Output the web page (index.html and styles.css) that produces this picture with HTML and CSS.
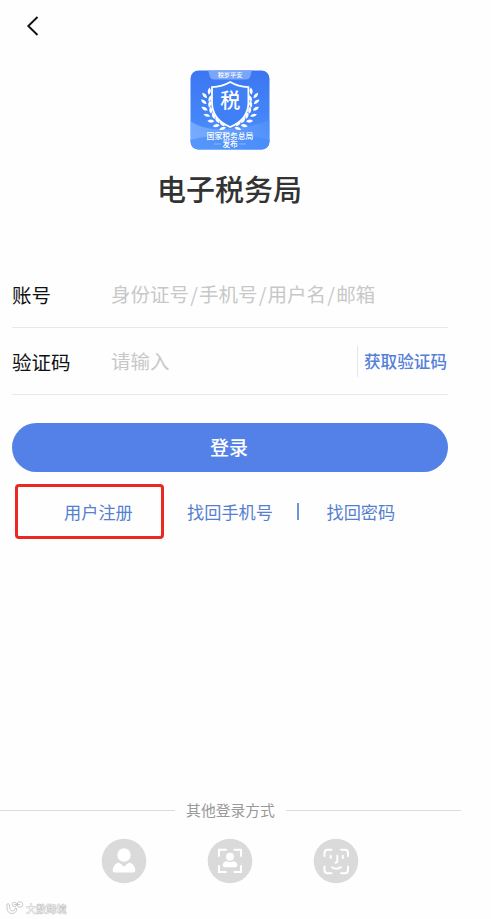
FILE: index.html
```
<!DOCTYPE html>
<html lang="zh-CN">
<head>
  <meta charset="UTF-8" />
  <title>电子税务局</title>
  <link rel="stylesheet" href="styles.css">
</head>
<body>
  <div class="page">
    <header>
      <svg class="back" width="14" height="22" viewBox="0 0 14 22"><path d="M11.5 2 L2.3 11 L11.5 20" /></svg>
    </header>

    <div class="logo">
      <svg width="80" height="80" viewBox="0 0 80 80">
        <defs>
          <linearGradient id="fundo" x1="0" y1="0" x2="0" y2="1">
            <stop offset="0" stop-color="#3c76f2" />
            <stop offset="0.6" stop-color="#4485f8" />
            <stop offset="1" stop-color="#5a9afb" />
          </linearGradient>
          <linearGradient id="onda" x1="0" y1="0" x2="1" y2="0">
            <stop offset="0" stop-color="#8dbbff" />
            <stop offset="1" stop-color="#5492fb" />
          </linearGradient>
          <clipPath id="borda"><rect x="0.5" y="0.5" width="79" height="79" rx="8" /></clipPath>
          <path id="folha" d="M0.5 0.5 Q-3.2 -2.2 -1.4 -6.4 Q2.8 -3.4 0.5 0.5Z" />
          <g id="ramo">
            <use href="#folha" transform="translate(18.5 24) rotate(22)" />
            <use href="#folha" transform="translate(16.2 28) rotate(-25)" />
            <use href="#folha" transform="translate(18.6 31) rotate(38)" />
            <use href="#folha" transform="translate(15.8 34) rotate(-35)" />
            <use href="#folha" transform="translate(18.8 37) rotate(25)" />
            <use href="#folha" transform="translate(16.9 40.5) rotate(-45)" />
            <use href="#folha" transform="translate(20.6 43) rotate(10)" />
            <use href="#folha" transform="translate(19.6 46.5) rotate(-58)" />
            <use href="#folha" transform="translate(24 48.5) rotate(-4)" />
            <use href="#folha" transform="translate(23.8 51.8) rotate(-70)" />
            <use href="#folha" transform="translate(28.5 53) rotate(-18)" />
            <use href="#folha" transform="translate(29.2 55.7) rotate(-82)" />
            <use href="#folha" transform="translate(34 56) rotate(-32)" />
            <use href="#folha" transform="translate(35.5 58) rotate(-92)" />
          </g>
        </defs>
        <g clip-path="url(#borda)">
          <rect width="80" height="80" fill="url(#fundo)" />
          <path d="M0 51 Q15 61 36 59 Q60 58 80 50 V80 H0Z" fill="url(#onda)" opacity="0.65" />
          <path d="M0 70 Q40 60 80 70 V80 H0Z" fill="#438afa" opacity="0.65" />
          <path d="M18 0 H62 L60 7 Q59 9.5 56 9.5 H24 Q21 9.5 20 7Z" fill="#78a6fa" />
        </g>
        <text x="40" y="7.3" class="logo-topo">税岁平安</text>
        <g fill="#fff">
          <use href="#ramo" />
          <use href="#ramo" transform="translate(80.4 0) scale(-1 1)" />
        </g>
        <path d="M40.2 12 Q48 16.6 58.4 17.2 V33 Q58 49.5 40.2 57 Q22.4 49.5 22 33 V17.2 Q32.4 16.6 40.2 12Z" fill="#3f80f6" stroke="#fff" stroke-width="1.8" />
        <text x="40.2" y="37.8" class="logo-centro">税</text>
        <text x="40" y="68.5" class="logo-nome">国家税务总局</text>
        <text x="40" y="77.3" class="logo-nome">发布</text>
        <path d="M24 74 H31 M49 74 H56" stroke="#b7d2fe" stroke-width="0.6" />
      </svg>
    </div>
    <h1>电子税务局</h1>

    <div class="form">
      <div class="campo">
        <label>账号</label>
        <div class="dica">身份证号<span>/</span>手机号<span>/</span>用户名<span>/</span>邮箱</div>
      </div>
      <div class="campo">
        <label>验证码</label>
        <div class="dica">请输入</div>
        <a class="btn-codigo">获取验证码</a>
      </div>
      <button class="btn-login">登录</button>
    </div>

    <div class="links">
      <a class="destaque">用户注册</a>
      <a class="link-celular">找回手机号</a>
      <span class="barra"></span>
      <a class="link-senha">找回密码</a>
    </div>

    <footer>
      <div class="outros">其他登录方式</div>
      <div class="icones">
        <svg width="46" height="46" viewBox="0 0 46 46">
          <circle class="disco" cx="23" cy="23" r="22.3" />
          <g fill="#fff">
            <circle cx="23" cy="17" r="6.7" />
            <path d="M17.2 24.5 Q20 25.2 23 28.7 Q26 25.2 28.8 24.5 Q33.8 26.5 34.3 32.5 Q34.3 34.4 32.5 34.4 H13.5 Q11.7 34.4 11.7 32.5 Q12.2 26.5 17.2 24.5Z" />
          </g>
        </svg>
        <svg width="46" height="46" viewBox="0 0 46 46">
          <circle class="disco" cx="23" cy="23" r="22.3" />
          <path class="traco" d="M12 18 V11.8 H19 M27.5 11.8 H34 V18 M34 28 V34 H27.5 M19 34 H12 V28" />
          <circle cx="23" cy="18.7" r="4" fill="#fff" />
          <path d="M19.5 23.2 Q23 25 26.5 23.2 Q30.3 24 30.3 27.2 Q30.3 29.2 28.3 29.2 H17.7 Q15.7 29.2 15.7 27.2 Q15.7 24 19.5 23.2Z" fill="#fff" />
        </svg>
        <svg width="46" height="46" viewBox="0 0 46 46">
          <circle class="disco" cx="23" cy="23" r="22.3" />
          <path class="traco" d="M11.5 18 V15 Q11.5 11.7 14.8 11.7 H18.5 M28 11.7 H31.7 Q35 11.7 35 15 V18 M35 28.5 V32 Q35 35.3 31.7 35.3 H28 M18.5 35.3 H14.8 Q11.5 35.3 11.5 32 V28.5" />
          <path class="traco" d="M17.7 17.7 V20 M29.8 17.7 V20 M24.3 17.7 V23.3 Q24.3 24.7 22.4 24.7 M19 29.2 Q23.3 32.2 28 29.2" />
        </svg>
      </div>
      <div class="marca">
        <svg width="18" height="14" viewBox="0 0 18 14">
          <path d="M1 3 Q3 2 3.5 4 Q3.2 9 5.5 10 Q9 10.5 9.5 7 L10.8 7.5 Q10.5 12.5 6 12.5 Q1 12 1 7Z" />
          <circle cx="8.5" cy="3.5" r="2.2" />
          <circle cx="14" cy="3.5" r="2.8" />
          <path d="M8 3.5 H14" />
        </svg>
        <span>大数跨境</span>
      </div>
    </footer>
  </div>
</body>
</html>
```
FILE: styles.css
```
* {
  box-sizing: border-box;
}

body {
  margin: 0;
  background-color: #fefefe;
  font-family: "Noto Sans CJK SC", sans-serif;
}

.page {
  width: 461px;
  height: 919px;
  display: flex;
  flex-direction: column;
}

/* Topo */
header {
  height: 70px;
  padding: 15px 0 0 26px;
}

.back {
  display: block;
  fill: none;
  stroke: #111;
  stroke-width: 1.9;
}

.logo {
  height: 80px;
  padding-left: 190px;
}

.logo svg {
  display: block;
}

.logo text {
  fill: #fff;
  text-anchor: middle;
}

.logo .logo-topo {
  font-size: 6.2px;
  font-weight: 500;
}

.logo .logo-centro {
  font-size: 20px;
  font-weight: 500;
}

.logo .logo-nome {
  font-size: 7.8px;
  font-weight: 500;
}

h1 {
  margin: 17px 0 0;
  height: 42px;
  line-height: 42px;
  padding-right: 2px;
  font-size: 29px;
  font-weight: 500;
  text-align: center;
  color: #333;
}

/* Formulario */
.form {
  margin: 52px 13px 0 12px;
}

.campo {
  display: flex;
  align-items: center;
  height: 67px;
  border-bottom: 1px solid #e9e9e9;
  font-size: 19.5px;
}

.campo label {
  width: 99px;
  color: #111;
}

.dica {
  flex: 1;
  padding-bottom: 2px;
  color: #c8c8c8;
  white-space: nowrap;
}

.dica span {
  padding: 0 1.2px;
}

.btn-codigo {
  height: 31px;
  line-height: 31px;
  padding: 0 1px 0 6px;
  border-left: 1px solid #e3e6ee;
  font-size: 16.6px;
  font-weight: 500;
  color: #5580d8;
}

.btn-login {
  display: block;
  width: 100%;
  height: 49px;
  margin-top: 28px;
  padding: 0 2px 2px 0;
  border: none;
  border-radius: 25px;
  background-color: #5381e8;
  color: #fff;
  font-family: inherit;
  font-size: 19px;
  font-weight: 500;
}

/* Links abaixo do botao */
.links {
  display: flex;
  align-items: center;
  margin: 12px 0 0 15px;
  font-size: 17.2px;
  color: #5580d0;
}

.destaque {
  width: 149px;
  height: 55px;
  line-height: 49px;
  padding-left: 46px;
  border: 3px solid #ea2a20;
  border-radius: 4px;
}

.link-celular {
  margin-left: 23px;
}

.barra {
  width: 2px;
  height: 17px;
  margin: 0 27.5px 0 24px;
  background-color: #6f93d8;
}

/* Outras formas de login */
footer {
  margin-top: auto;
}

.outros {
  display: flex;
  align-items: center;
  gap: 11px;
  height: 22px;
  line-height: 20px;
  font-size: 14.8px;
  color: #999;
}

.outros::before,
.outros::after {
  content: "";
  flex: 1;
  height: 1px;
  background-color: #dcdcdc;
}

.icones {
  display: flex;
  gap: 60px;
  margin: 17px 0 0 101px;
}

.disco {
  fill: #dadada;
}

.traco {
  fill: none;
  stroke: #fff;
  stroke-width: 2;
  stroke-linecap: round;
}

/* Marca do rodape */
.marca {
  display: flex;
  align-items: center;
  gap: 2px;
  height: 16px;
  margin: 16px 0 3px 6px;
  font-size: 10.2px;
  font-weight: bold;
  color: #fff;
  -webkit-text-stroke: 0.5px #c4c4c4;
}

.marca svg {
  fill: #fff;
  stroke: #c4c4c4;
  stroke-width: 0.9;
}
```
